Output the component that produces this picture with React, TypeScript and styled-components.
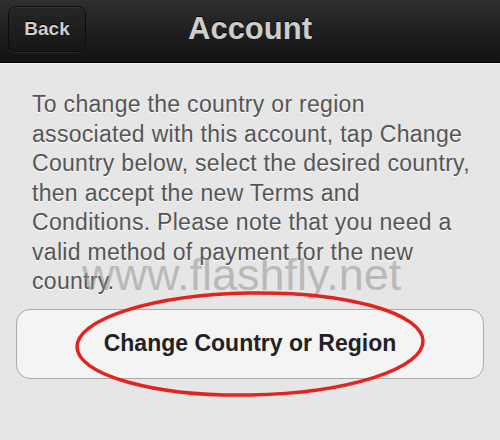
import React from "react";
import styled, { createGlobalStyle } from "styled-components";

const Global = createGlobalStyle`
  html, body { margin: 0; padding: 0; }
  body { width: 500px; height: 440px; overflow: hidden; background: #e6e6e6; font-family: "Liberation Sans", Arial, sans-serif; }
`;

const Screen = styled.div`
  position: relative;
  width: 500px;
  height: 440px;
  background: #e6e6e6;
  display: flex;
  flex-direction: column;
  overflow: hidden;
`;

const NavBar = styled.div`
  position: relative;
  height: 62px;
  flex: none;
  background: linear-gradient(#2f2f2f, #1f1f1f 50%, #121212);
  border-bottom: 1px solid #000;
  box-shadow: 0 1px 0 #f2f2f2;
  display: flex;
  align-items: center;
  justify-content: center;
`;

const BackButton = styled.div`
  position: absolute;
  left: 8px;
  top: 6px;
  width: 76px;
  height: 44px;
  border-radius: 8px;
  border: 1px solid #0b0b0b;
  background: linear-gradient(#262626, #161616);
  box-shadow: inset 0 1px 0 rgba(255,255,255,0.08), 0 1px 0 rgba(255,255,255,0.08);
  display: flex;
  align-items: center;
  justify-content: center;
  color: #cfcfcf;
  font-weight: bold;
  font-size: 19px;
  text-shadow: 0 -1px 0 #000;
`;

const Title = styled.div`
  color: #cdcdcd;
  font-weight: bold;
  font-size: 31px;
  margin-top: -5px;
  text-shadow: 0 -1px 0 #000;
`;

const Content = styled.div`
  position: relative;
  flex: 1;
  padding: 27px 16px 0 16px;
  display: flex;
  flex-direction: column;
`;

const Description = styled.p`
  margin: 0 0 0 16px;
  font-size: 23px;
  letter-spacing: 0.3px;
  line-height: 29.5px;
  color: #555;
  text-shadow: 0 1px 0 #fff;
  white-space: nowrap;
`;

const ActionButton = styled.div`
  margin-top: 12px;
  height: 68px;
  border: 1px solid #a9a9a9;
  border-radius: 14px;
  background: #f4f4f4;
  display: flex;
  align-items: center;
  justify-content: center;
  font-weight: bold;
  font-size: 23px;
  color: #222;
`;

const Watermark = styled.div`
  position: absolute;
  left: 82px;
  top: 252px;
  font-size: 45px;
  line-height: 1;
  color: rgba(140,140,140,0.5);
  pointer-events: none;
`;

const Circle = styled.svg`
  position: absolute;
  left: 0;
  top: 0;
  pointer-events: none;
`;

export default function App() {
  return (
    <Screen>
      <Global />
      <NavBar>
        <BackButton>Back</BackButton>
        <Title>Account</Title>
      </NavBar>
      <Content>
        <Description>
          To change the country or region<br />
          associated with this account, tap Change<br />
          Country below, select the desired country,<br />
          then accept the new Terms and<br />
          Conditions. Please note that you need a<br />
          valid method of payment for the new<br />
          country.
        </Description>
        <ActionButton>Change Country or Region</ActionButton>
      </Content>
      <Watermark>www.flashfly.net</Watermark>
      <Circle width="500" height="440" viewBox="0 0 500 440">
        <ellipse cx="250" cy="344" rx="173" ry="51" fill="none" stroke="#e2231e" strokeWidth="3.5" transform="rotate(-1 250 344)" />
      </Circle>
    </Screen>
  );
}
